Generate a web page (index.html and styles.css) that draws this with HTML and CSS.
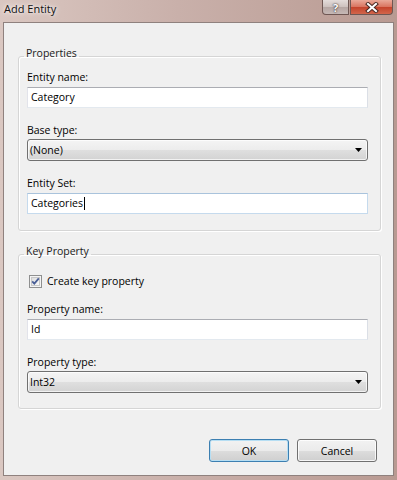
FILE: index.html
```html
<!DOCTYPE html>
<html>
<head>
<meta charset="utf-8">
<link rel="stylesheet" href="styles.css">
</head>
<body>
<div class="window">
  <div class="titlebar">
    <span class="title">Add Entity</span>
    <div class="captions">
      <div class="cbtn help">?</div>
      <div class="cbtn close">
        <svg width="14" height="11" viewBox="0 0 14 11">
          <path d="M3 2 L11 9 M11 2 L3 9" stroke="#4a2a24" stroke-width="4" stroke-linecap="square"/>
          <path d="M3 2 L11 9 M11 2 L3 9" stroke="#ffffff" stroke-width="2" stroke-linecap="square"/>
        </svg>
      </div>
    </div>
  </div>
  <div class="client">
    <fieldset class="group first">
      <legend>Properties</legend>
      <div class="field">
        <label>Entity name:</label>
        <div class="textbox">Category</div>
      </div>
      <div class="field">
        <label class="sel">Base type:</label>
        <div class="select"><span>(None)</span>
          <svg width="7" height="4" viewBox="0 0 7 4"><path d="M0 0 H7 L3.5 4 Z" fill="#000"/></svg>
        </div>
      </div>
      <div class="field">
        <label>Entity Set:</label>
        <div class="textbox focus">Categories<span class="caret"></span></div>
      </div>
    </fieldset>
    <fieldset class="group second">
      <legend>Key Property</legend>
      <div class="check-row">
        <svg class="checkbox" width="13" height="13" viewBox="0 0 13 13">
          <defs>
            <linearGradient id="cbg" x1="0" y1="0" x2="1" y2="1">
              <stop offset="0" stop-color="#dcdcdc"/>
              <stop offset="1" stop-color="#fbfbfb"/>
            </linearGradient>
          </defs>
          <rect x="0.5" y="0.5" width="12" height="12" fill="#f4f4f4" stroke="#8e8f8f"/>
          <rect x="2.5" y="2.5" width="8" height="8" fill="url(#cbg)" stroke="#c8c8c8"/>
          <path d="M3.2 6.4 L5.3 8.6 L9.8 3.4" fill="none" stroke="#4a5f97" stroke-width="1.8"/>
        </svg>
        <span>Create key property</span>
      </div>
      <div class="field">
        <label>Property name:</label>
        <div class="textbox">Id</div>
      </div>
      <div class="field">
        <label class="sel">Property type:</label>
        <div class="select"><span>Int32</span>
          <svg width="7" height="4" viewBox="0 0 7 4"><path d="M0 0 H7 L3.5 4 Z" fill="#000"/></svg>
        </div>
      </div>
    </fieldset>
    <div class="buttons">
      <button class="btn default">OK</button>
      <button class="btn">Cancel</button>
    </div>
  </div>
</div>
</body>
</html>
```

FILE: styles.css
```css
* { box-sizing: border-box; }

body {
  margin: 0;
  font-family: "Open Sans", "Noto Sans", sans-serif;
  font-size: 10.5px;
  color: #000;
}

.window {
  width: 397px;
  height: 480px;
  display: flex;
  flex-direction: column;
  padding: 0 3px 4px 3px;
  background: linear-gradient(to right, #dac7c1 0%, #c9b0aa 45%, #b99a92 100%);
}

.titlebar {
  height: 22px;
  flex: none;
  display: flex;
  justify-content: space-between;
  align-items: flex-start;
}

.title {
  padding: 2px 0 0 1px;
  font-size: 11px;
  line-height: 14px;
  color: #111;
  text-shadow: 0 0 6px #fff, 0 0 3px #f6eeec;
}

.captions {
  display: flex;
  gap: 1px;
  margin-right: 1px;
}

.cbtn {
  height: 15px;
  border: 1px solid #6f5753;
  border-top: none;
  display: flex;
  align-items: center;
  justify-content: center;
}

.help {
  width: 27px;
  border-radius: 0 0 0 4px;
  background: linear-gradient(#e4dcda 0%, #cdc1be 50%, #b5a6a3 51%, #c6b8b5 100%);
  color: #fff;
  font-weight: bold;
  font-size: 11px;
  line-height: 13px;
  text-shadow: 0 0 2px #3b3030, 0 0 1px #3b3030;
}

.close {
  width: 43px;
  border-radius: 0 0 4px 0;
  background: linear-gradient(#e9a999 0%, #d9735e 50%, #c4432b 51%, #d2664b 100%);
}

.client {
  flex: 1;
  display: flex;
  flex-direction: column;
  background: #f0f0f0;
  border: 1px solid #8f817e;
  padding: 23px 12px 0 14px;
}

.group {
  margin: 0;
  min-width: 0;
  border: 1px solid #d5d5d5;
  border-radius: 3px;
  padding: 3px 12px 16px 8px;
  box-shadow: inset 1px 1px 0 #fff, 1px 1px 0 #fff;
}

.group.second {
  margin-top: 13px;
  padding-bottom: 15px;
}

legend {
  padding: 0 2px 7px;
  margin-left: -3px;
  line-height: 14px;
  color: #1a1a1a;
}

.field + .field { margin-top: 15px; }

label {
  display: block;
  line-height: 15px;
  margin-bottom: 2px;
}

label.sel { margin-bottom: 1px; }

.textbox {
  height: 21px;
  border: 1px solid;
  border-color: #abadb3 #dbdfe6 #e3e9ef #e2e3ea;
  background: #fff;
  padding-left: 3px;
  line-height: 19px;
  display: flex;
  align-items: center;
}

.textbox.focus {
  border-color: #a9c3dc #c5daed #c5daed #c5daed;
}

.caret {
  display: inline-block;
  width: 1px;
  height: 13px;
  margin-left: 1px;
  background: #000;
}

.select {
  height: 22px;
  border: 1px solid #707070;
  border-radius: 3px;
  background: linear-gradient(#f4f4f4 0%, #ececec 50%, #dfdfdf 51%, #d3d3d3 100%);
  box-shadow: inset 0 0 0 1px rgba(255, 255, 255, 0.7);
  display: flex;
  align-items: center;
  justify-content: space-between;
  padding: 0 5px 0 2px;
}

.check-row {
  display: flex;
  align-items: center;
  gap: 5px;
  margin: 6px 0 13px 2px;
  line-height: 15px;
}

.checkbox { flex: none; }

.buttons {
  display: flex;
  justify-content: flex-end;
  gap: 8px;
  margin: 30px 4px 0 0;
}

.btn {
  width: 80px;
  height: 23px;
  padding: 0;
  font: inherit;
  color: #000;
  border: 1px solid #707070;
  border-radius: 3px;
  background: linear-gradient(#f2f2f2 0%, #ebebeb 50%, #dddddd 51%, #cfcfcf 100%);
  box-shadow: inset 0 0 0 1px rgba(255, 255, 255, 0.8);
}

.btn.default {
  border-color: #3c7fb1;
  box-shadow: inset 0 0 0 1px #b6def3;
}
```
